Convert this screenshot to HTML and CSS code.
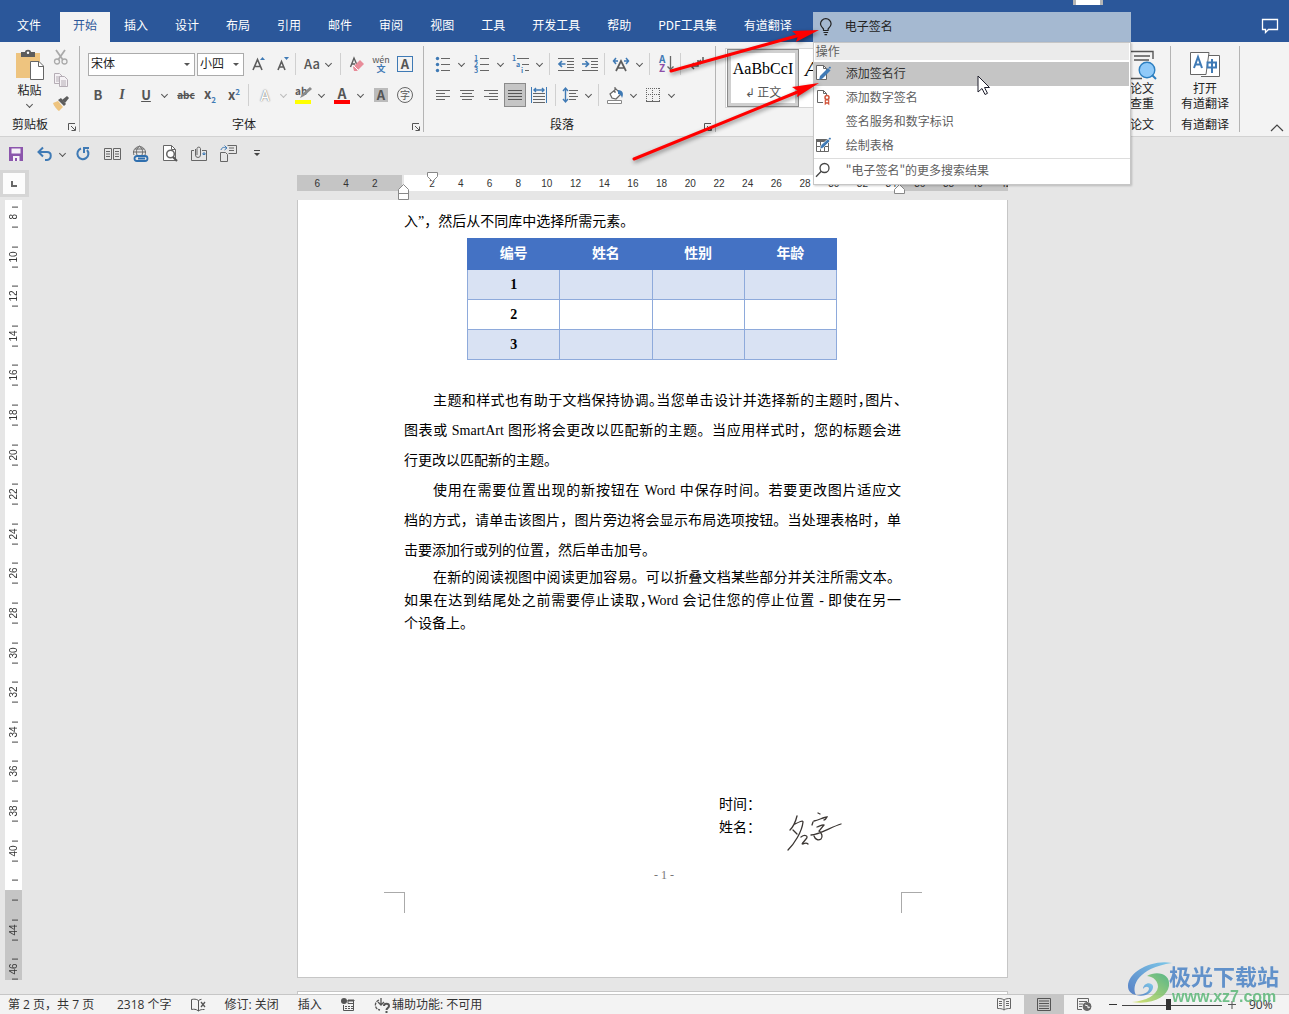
FILE: index.html
```html
<!DOCTYPE html>
<html lang="zh-CN">
<head>
<meta charset="utf-8">
<title>文档</title>
<link rel="stylesheet" href="styles.css">
</head>
<body>
<header class="tabbar">
  <nav class="tabs">
    <button class="tab file">文件</button><button class="tab active">开始</button><button class="tab">插入</button><button class="tab">设计</button><button class="tab">布局</button><button class="tab">引用</button><button class="tab">邮件</button><button class="tab">审阅</button><button class="tab">视图</button><button class="tab">工具</button><button class="tab">开发工具</button><button class="tab">帮助</button><button class="tab">PDF工具集</button><button class="tab">有道翻译</button>
  </nav>
  <div class="search">
    <svg width="16" height="18" viewBox="0 0 16 18" fill="none" stroke="#222" stroke-width="1.2"><path d="M5.5 12.5V11C4 9.500 2.500 8 2.500 6a5.300 5.300 0 0 1 10.600 0c0 2-1.500 3.500-3 5v1.500zM5.500 14.500h4.600M6.500 16.700h2.600"/></svg>
    <input type="text" aria-label="操作说明搜索" value="电子签名">
    <div class="results">
      <h2>操作</h2>
      <button class="res hot"><svg width="16" height="16" viewBox="0 0 16 16"><path d="M1.500.5h7l3 3v11h-10z" fill="#fff" stroke="#666"/><path d="M8.500.5v3h3" fill="none" stroke="#666"/><path d="M4 15l1-4 8-8 2.500 2.500-8 8z" fill="#3f7ab5"/><path d="M13.500 2.500l1.500-1 1 1-1 1.500z" fill="#3f7ab5"/></svg>添加签名行</button>
      <button class="res"><svg width="16" height="16" viewBox="0 0 16 16" fill="none"><path d="M8 13.500H2.500v-12h6l3 3V6M8.500 1.500v3h3" stroke="#666"/><circle cx="12" cy="8.500" r="2" stroke="#d2543a" stroke-width="1.500"/><path d="M10.300 15v-4h3.400v4l-1.700-1.500z" stroke="#d2543a" stroke-width="1.200"/></svg>添加数字签名</button>
      <button class="res"><span class="noicon"></span>签名服务和数字标识</button>
      <button class="res"><svg width="16" height="16" viewBox="0 0 16 16"><path d="M1.500 2.500h12v12h-12z" fill="#fff" stroke="#666"/><path d="M1 2h12v3H1zM1 9h12v1H1zM5 3h1v12H5zM9 9h1v6H9z" fill="#666"/><path d="M5 12l1-4 7-6 2 2-7 7z" fill="#3f7ab5" stroke="#fff" stroke-width=".6"/><path d="M13.500 1.500l1.500-1 1 1-1 1.500z" fill="#3f7ab5"/></svg>绘制表格</button>
      <button class="res more"><svg width="16" height="16" viewBox="0 0 16 16" fill="none" stroke="#444" stroke-width="1.300"><circle cx="9.500" cy="6" r="4.500"/><path d="M6.300 9.300L1 14.800"/></svg>"电子签名"的更多搜索结果</button>
      <svg class="cursor" width="14" height="21" viewBox="0 0 14 21"><path d="M1 1v16l4-3.500 3 6 2.500-1.200-3-5.800h5z" fill="#fff" stroke="#1d1d2b"/></svg>
    </div>
  </div>
  <button class="comment" aria-label="批注"><svg width="18" height="16" viewBox="0 0 18 16" fill="none" stroke="#fff" stroke-width="1.300"><path d="M1.500 1.500h15v10H7.500L4.500 14.500v-3h-3z"/></svg></button>
</header>

<section class="ribbon">
  <div class="group clip">
    <div class="body">
      <button class="big paste"><svg width="28" height="30" viewBox="0 0 28 30"><path d="M0 3h24v25H0z" fill="#eec47f"/><path d="M5 7V2h4c0-3 6-3 6 0h4v5z" fill="#5c5c5c"/><circle cx="12" cy="2.800" r="1.200" fill="#fff"/><path d="M14.500 11.500h8.500l4.500 4.500v13.500h-13z" fill="#fff" stroke="#666"/><path d="M22.500 11.500v5h5" fill="none" stroke="#666"/></svg><span>粘贴</span><i class="caret"></i></button>
      <div class="side">
        <button aria-label="剪切"><svg width="16" height="16" viewBox="0 0 16 16" fill="none" stroke="#aaa"><path d="M3 1l7 10M12 1L5 11" stroke-width="1.800"/><circle cx="4" cy="12.500" r="2.500" stroke-width="1.300"/><circle cx="11.500" cy="12.500" r="2.500" stroke-width="1.300"/></svg></button>
        <button aria-label="复制"><svg width="16" height="16" viewBox="0 0 16 16" fill="#f5f2f5" stroke="#b5adb5"><path d="M1.500 1.500h5l3 3v7h-8zM3 5h4M3 7h4M3 9h4"/><path d="M6.500 4.500h5l3 3v7h-8zM8 9h5M8 11h5M8 13h5"/></svg></button>
        <button aria-label="格式刷"><svg width="16" height="16" viewBox="0 0 16 16"><path d="M0 8l5-2 5 6-4 4c-2-1-5-5-6-8z" fill="#eec47f"/><path d="M5 5l3-2 5 6-2 2z" fill="#5c5c5c"/><path d="M9 5l5-4 2 2-4 5z" fill="#5c5c5c"/></svg></button>
      </div>
    </div>
    <div class="foot"><span>剪贴板</span><button class="launch" aria-label="剪贴板选项"><svg width="8" height="8" viewBox="0 0 8 8" fill="none" stroke="#555"><path d="M.5 7V.5H7M3 3l4 4M7.500 3.500v4h-4"/></svg></button></div>
  </div>

  <div class="group font">
    <div class="rows">
      <div class="row">
        <span class="combo wide"><select aria-label="字体"><option>宋体</option></select></span>
        <span class="combo narrow"><select aria-label="字号"><option>小四</option></select></span>
        <button class="ib ml3" aria-label="增大字号"><svg width="16" height="16" viewBox="0 0 16 16"><path d="M2 14L6.500 3.500 11 14M3.500 10.500h6" fill="none" stroke="#5c5c5c" stroke-width="1.600"/><path d="M9 4l2.500-3L14 4z" fill="#3f7ab5"/></svg></button>
        <button class="ib" aria-label="减小字号"><svg width="16" height="16" viewBox="0 0 16 16"><path d="M3 14l3.500-8.500L10 14M4 11h5" fill="none" stroke="#5c5c5c" stroke-width="1.600"/><path d="M9 1l2.500 3L14 1z" fill="#3f7ab5"/></svg></button>
        <i class="sep"></i>
        <button class="split"><span class="ic aa">Aa</span><i class="caret"></i></button>
        <i class="sep ml6"></i>
        <button class="ib ml2" aria-label="清除格式"><svg width="16" height="16" viewBox="0 0 16 16"><path d="M1.500 11L5 2l3 7M3 8h3" fill="none" stroke="#5c5c5c" stroke-width="1.400"/><path d="M4 11l7-7 4 4-7 7-3 0z" fill="#e88c99"/><path d="M5 10l4 4" stroke="#fff"/></svg></button>
        <button class="ib wen" aria-label="拼音指南"><span>wén</span><b>文</b></button>
        <button class="ib"><span class="box">A</span></button>
      </div>
      <div class="row">
        <button class="ib"><b>B</b></button>
        <button class="ib it">I</button>
        <button class="split"><span class="ic un">U</span><i class="caret"></i></button>
        <button class="ib ml4 st">abc</button>
        <button class="ib"><b>x<sub>2</sub></b></button>
        <button class="ib"><b>x<sup>2</sup></b></button>
        <i class="sep ml2"></i>
        <button class="split ml2"><span class="ic glow">A</span><i class="caret pale"></i></button>
        <button class="split ml2" aria-label="突出显示"><span class="ic"><svg width="18" height="18" viewBox="0 0 18 18"><text x="1" y="9" font-size="10" font-weight="bold" fill="#5c5c5c">ab</text><path d="M6 12l2-4 8-7 2 2-8 7z" fill="#8a8a8a"/><path d="M1 14h16v4H1z" fill="#ff0"/></svg></span><i class="caret"></i></button>
        <button class="split ml3"><span class="ic red">A</span><i class="caret"></i></button>
        <button class="ib ml3"><span class="shade">A</span></button>
        <button class="ib"><span class="ring">字</span></button>
      </div>
    </div>
    <div class="foot"><span>字体</span><button class="launch" aria-label="字体选项"><svg width="8" height="8" viewBox="0 0 8 8" fill="none" stroke="#555"><path d="M.5 7V.5H7M3 3l4 4M7.500 3.500v4h-4"/></svg></button></div>
  </div>

  <div class="group para">
    <div class="rows">
      <div class="row">
        <button class="split" aria-label="项目符号"><span class="ic"><svg width="16" height="16" viewBox="0 0 16 16"><g fill="#3f7ab5"><circle cx="2.500" cy="2.500" r="1.700"/><circle cx="2.500" cy="8.500" r="1.700"/><circle cx="2.500" cy="14.500" r="1.700"/></g><path d="M6 2h9v1H6zM6 8h9v1H6zM6 14h9v1H6z" fill="#666"/></svg></span><i class="caret"></i></button>
        <button class="split ml3" aria-label="编号"><span class="ic"><svg width="16" height="18" viewBox="0 0 16 18"><g font-size="7" font-weight="bold" fill="#3f7ab5"><text x="0" y="6">1</text><text x="0" y="12">2</text><text x="0" y="18">3</text></g><path d="M6 3h9v1H6zM6 9h9v1H6zM6 15h9v1H6z" fill="#666"/></svg></span><i class="caret"></i></button>
        <button class="split ml3" aria-label="多级列表"><span class="ic"><svg width="18" height="18" viewBox="0 0 18 18"><g font-size="7" font-weight="bold" fill="#3f7ab5"><text x="0" y="6">1</text><text x="4" y="12">a</text><text x="9" y="18">i</text></g><path d="M5 3h12v1H5zM10 9h7v1h-7zM13 15h4v1h-4z" fill="#666"/></svg></span><i class="caret"></i></button>
        <i class="sep ml4"></i>
        <button class="ib ml2" aria-label="减少缩进"><svg width="16" height="14" viewBox="0 0 16 14"><path d="M0 1h16v1H0zM9 4h7v1H9zM9 7h7v1H9zM9 10h7v1H9zM0 13h16v1H0z" fill="#666"/><path d="M7.500 7h-6M4 4L1 7l3 3" fill="none" stroke="#3f7ab5" stroke-width="1.700"/></svg></button>
        <button class="ib" aria-label="增加缩进"><svg width="16" height="14" viewBox="0 0 16 14"><path d="M0 1h16v1H0zM9 4h7v1H9zM9 7h7v1H9zM9 10h7v1H9zM0 13h16v1H0z" fill="#666"/><path d="M0 7h6M3.500 4l3 3-3 3" fill="none" stroke="#3f7ab5" stroke-width="1.700"/></svg></button>
        <i class="sep ml2"></i>
        <button class="split ml2" aria-label="中文版式"><span class="ic"><svg width="18" height="16" viewBox="0 0 18 16" fill="none"><path d="M4 15L9 5l5 10M6 12h6" stroke="#5c5c5c" stroke-width="1.700"/><path d="M6 5H2M4 2L1.500 5 4 8M12 5h4M14 2l2.500 3L14 8" stroke="#3f7ab5" stroke-width="1.500"/></svg></span><i class="caret"></i></button>
        <i class="sep ml4"></i>
        <button class="ib ml2" aria-label="排序"><svg width="16" height="18" viewBox="0 0 16 18"><g font-size="10" font-weight="bold"><text x="1" y="8" fill="#3f7ab5">A</text><text x="1" y="17" fill="#8d4fa8">Z</text></g><path d="M12.500 1v13M9.500 11.500l3 3 3-3" fill="none" stroke="#666" stroke-width="1.300"/></svg></button>
        <i class="sep ml2"></i>
        <button class="ib ml2" aria-label="显示标记"><svg width="16" height="16" viewBox="0 0 16 16" fill="none" stroke="#5c5c5c" stroke-width="1.500"><path d="M14 1v5H10M12 4L10 6l2 2M9 4v6H2M5 7l-3 3 3 3"/></svg></button>
      </div>
      <div class="row">
        <button class="ib" aria-label="左对齐"><svg width="14" height="12" viewBox="0 0 14 12"><path d="M0 1h14v1H0zM0 4h9v1H0zM0 7h14v1H0zM0 10h9v1H0z" fill="#666"/></svg></button>
        <button class="ib" aria-label="居中"><svg width="14" height="12" viewBox="0 0 14 12"><path d="M0 1h14v1H0zM2 4h10v1H2zM0 7h14v1H0zM2 10h10v1H2z" fill="#666"/></svg></button>
        <button class="ib" aria-label="右对齐"><svg width="14" height="12" viewBox="0 0 14 12"><path d="M0 1h14v1H0zM5 4h9v1H5zM0 7h14v1H0zM5 10h9v1H5z" fill="#666"/></svg></button>
        <button class="ib on" aria-label="两端对齐"><svg width="14" height="12" viewBox="0 0 14 12"><path d="M0 1h14v1H0zM0 4h14v1H0zM0 7h14v1H0zM0 10h14v1H0z" fill="#555"/></svg></button>
        <button class="ib" aria-label="分散对齐"><svg width="16" height="16" viewBox="0 0 16 16"><path d="M0 0h1v16H0zM15 0h1v16h-1z" fill="#3f7ab5"/><path d="M3 3h10M5 1L3 3l2 2M11 1l2 2-2 2" fill="none" stroke="#3f7ab5" stroke-width="1.400"/><path d="M2 6h12v1H2zM2 9h12v1H2zM2 12h12v1H2zM2 15h12v1H2z" fill="#666"/></svg></button>
        <i class="sep ml4"></i>
        <button class="split" aria-label="行距"><span class="ic"><svg width="16" height="16" viewBox="0 0 16 16"><path d="M3.500 1v14M1 4l2.500-3L6 4M1 12l2.500 3L6 12" fill="none" stroke="#3f7ab5" stroke-width="1.400"/><path d="M7 3h9v1H7zM7 6h7v1H7zM7 9h9v1H7zM7 12h7v1H7z" fill="#666"/></svg></span><i class="caret"></i></button>
        <i class="sep ml4"></i>
        <button class="split ml2" aria-label="底纹"><span class="ic"><svg width="18" height="18" viewBox="0 0 18 18"><path d="M4 8l6-5 5 5-5 5-4-1zM9 1v6" fill="#fff" stroke="#666" stroke-width="1.200"/><path d="M12 4c5 0 6 4 4 8-1-3-2-4-4-4z" fill="#3f7ab5"/><path d="M1.500 14.500h14v3h-14z" fill="#fff" stroke="#888"/></svg></span><i class="caret"></i></button>
        <button class="split ml2" aria-label="边框"><span class="ic"><svg width="14" height="14" viewBox="0 0 14 14" fill="none" stroke="#666"><path d="M0 .5h14M0 6.500h14M.5 0v14M6.500 0v14M13.500 0v14" stroke-dasharray="1 1"/><path d="M0 13.500h14"/></svg></span><i class="caret"></i></button>
      </div>
    </div>
    <div class="foot"><span>段落</span><button class="launch" aria-label="段落选项"><svg width="8" height="8" viewBox="0 0 8 8" fill="none" stroke="#555"><path d="M.5 7V.5H7M3 3l4 4M7.500 3.500v4h-4"/></svg></button></div>
  </div>

  <div class="group styles">
    <div class="gallery">
      <button class="style sel"><span>AaBbCcI</span><small>↲ 正文</small></button>
      <button class="style em"><span>A</span></button>
    </div>
  </div>

  <div class="group paper">
    <button class="big"><svg width="30" height="30" viewBox="0 0 30 30"><path d="M2 28V1.500h24V9M2 28.500h13" fill="none" stroke="#555" stroke-width="1.400"/><path d="M7 6h16M7 10h15" stroke="#555" stroke-width="1.600"/><circle cx="20" cy="20" r="7.800" fill="#90caf9" stroke="#2c7fc0" stroke-width="1.400"/><path d="M25 25l4 4" stroke="#2c7fc0" stroke-width="2"/></svg><span>论文<br>查重</span></button>
    <div class="foot"><span>论文</span></div>
  </div>
  <div class="group youdao">
    <button class="big"><svg width="30" height="30" viewBox="0 0 30 30"><path d="M14 5.500h15.500v21H11" fill="#fff" stroke="#666"/><path d="M.5 2.500H19L16 24.500H.500z" fill="#fff" stroke="#666"/><path d="M4 18L8 7l4 11M5.500 14.500h5" fill="none" stroke="#3f7ab5" stroke-width="2"/><path d="M17.500 12.500h8.500v5h-8.500zM22 9v14" fill="none" stroke="#3f7ab5" stroke-width="2"/></svg><span>打开<br>有道翻译</span></button>
    <div class="foot"><span>有道翻译</span></div>
  </div>
  <button class="collapse" aria-label="折叠功能区"><svg width="14" height="8" viewBox="0 0 14 8" fill="none" stroke="#444" stroke-width="1.200"><path d="M1 7l6-6 6 6"/></svg></button>
</section>

<div class="quick">
  <button aria-label="保存"><svg width="14" height="14" viewBox="0 0 14 14"><path d="M0 0h14v14H0z" fill="#8b55ac"/><path d="M2.500 1.500h9v5h-9zM4 9h6.500v5H8v-3H6v3H4z" fill="#f5f0f7"/></svg></button>
  <button aria-label="撤消"><svg width="16" height="14" viewBox="0 0 16 14" fill="none" stroke="#3f7ab5" stroke-width="2"><path d="M2 5h8c5 0 5 7 0 8H8M6 .5L1.500 5 6 9.500"/></svg></button>
  <button class="tiny" aria-label="撤消列表"><i class="caret"></i></button>
  <button aria-label="恢复"><svg width="16" height="16" viewBox="0 0 16 16" fill="none" stroke="#3f7ab5" stroke-width="2"><path d="M6 2.500a5.500 5.500 0 1 0 6 1.500M9 7V2h5"/></svg></button>
  <button aria-label="阅读"><svg width="17" height="14" viewBox="0 0 17 14" fill="none" stroke="#666"><path d="M.5 1.500h7v11h-7zM9.500 1.500h7v11h-7zM2 4.500h4M2 7h4M2 9.500h4M11 4.500h4M11 7h4M11 9.500h4"/></svg></button>
  <button aria-label="超链接"><svg width="18" height="18" viewBox="0 0 18 18" fill="none"><path d="M2 10a6 6 0 1 1 11 0M1.500 7h12M3 4h9M7.500 1C4 4 4 7 5 10M7.500 1c3.500 3 3.500 6 2.500 9" stroke="#666"/><path d="M9 11H5a2.500 2.500 0 0 0 0 5h4M9 11h4a2.500 2.500 0 0 1 0 5H9M6 13.500h7" stroke="#2f6fae" stroke-width="1.800"/></svg></button>
  <button aria-label="打印预览"><svg width="16" height="17" viewBox="0 0 16 17" fill="none"><path d="M1.500.5h8l4 4v11h-12z" fill="#fff" stroke="#666"/><path d="M9.500.5v4h4" stroke="#666"/><circle cx="8.500" cy="9" r="3.800" stroke="#666" stroke-width="1.500"/><path d="M11 12l4 4" stroke="#555" stroke-width="2.200"/></svg></button>
  <button aria-label="邮件附件"><svg width="17" height="16" viewBox="0 0 17 16" fill="none" stroke="#666"><path d="M3 4.500H.5v10h15v-10H11"/><path d="M4.500 3v6a2.500 2.500 0 0 0 5 0V2.500a1.800 1.800 0 0 0-3.500 0V9"/><path d="M12 7h2v1.500h-2z" stroke="#3f7ab5"/></svg></button>
  <button aria-label="发送"><svg width="17" height="17" viewBox="0 0 17 17" fill="none" stroke="#666"><path d="M7.500.5h9v8h-8M9 3h5M9 5.500h5M.5 7.500h5l2 2v7h-7z"/><path d="M1 5c1-3 3-3 5-2M4.500.5L7 3 4.500 5" stroke="#3f7ab5"/></svg></button>
  <button aria-label="自定义"><svg width="6" height="7" viewBox="0 0 6 7"><path d="M0 0h6v1H0zM0 3h6L3 6z" fill="#444"/></svg></button>
</div>

<main class="work">
  <button class="tabsel" aria-label="制表符"><svg width="6" height="6" viewBox="0 0 6 6"><path d="M1 0v5h5" fill="none" stroke="#666" stroke-width="2"/></svg></button>
  <div class="hwrap">
    <div class="hruler">
      <div class="nums"><span>6</span><span>4</span><span>2</span><span></span><span>2</span><span>4</span><span>6</span><span>8</span><span>10</span><span>12</span><span>14</span><span>16</span><span>18</span><span>20</span><span>22</span><span>24</span><span>26</span><span>28</span><span>30</span><span>32</span><span>34</span><span>36</span><span>38</span><span>40</span><span>42</span></div>
      <svg class="mark first" width="11" height="10" viewBox="0 0 11 10"><path d="M.5.5h10v4l-5 5-5-5z" fill="#fff" stroke="#888"/></svg>
      <svg class="mark hang" width="11" height="16" viewBox="0 0 11 16"><path d="M.5 5.500l5-5 5 5v10H.5zM.5 9.500h10" fill="#fff" stroke="#888"/></svg>
      <svg class="mark right" width="11" height="10" viewBox="0 0 11 10"><path d="M.5 5.500l5-5 5 5v4H.5z" fill="#fff" stroke="#888"/></svg>
    </div>
  </div>
  <div class="vruler"><div class="vnums"><span>8</span><span>10</span><span>12</span><span>14</span><span>16</span><span>18</span><span>20</span><span>22</span><span>24</span><span>26</span><span>28</span><span>30</span><span>32</span><span>34</span><span>36</span><span>38</span><span>40</span><span></span><span>44</span><span>46</span></div></div>
  <div class="canvas">
    <article class="page">
      <p class="loose">入”，然后从不同库中选择所需元素。</p>
      <table>
        <thead><tr><th>编号</th><th>姓名</th><th>性别</th><th>年龄</th></tr></thead>
        <tbody>
          <tr><th>1</th><td></td><td></td><td></td></tr>
          <tr><th>2</th><td></td><td></td><td></td></tr>
          <tr><th>3</th><td></td><td></td><td></td></tr>
        </tbody>
      </table>
      <p class="loose"><span class="ln ind half">主题和样式也有助于文档保持协调。当您单击设计并选择新的主题时，图片、</span><span class="ln">图表或 SmartArt 图形将会更改以匹配新的主题。当应用样式时，您的标题会进</span><span>行更改以匹配新的主题。</span></p>
      <p class="loose"><span class="ln ind">使用在需要位置出现的新按钮在 Word 中保存时间。若要更改图片适应文</span><span class="ln">档的方式，请单击该图片，图片旁边将会显示布局选项按钮。当处理表格时，单</span><span>击要添加行或列的位置，然后单击加号。</span></p>
      <p class="tight"><span class="ln ind">在新的阅读视图中阅读更加容易。可以折叠文档某些部分并关注所需文本。</span><span class="ln half">如果在达到结尾处之前需要停止读取，Word 会记住您的停止位置 - 即使在另一</span><span>个设备上。</span></p>
      <div class="sign tight"><div>时间：</div><div>姓名：</div>
        <svg width="56" height="40" viewBox="0 0 56 40" fill="none" stroke="#3b3633" stroke-width="1.300" stroke-linecap="round"><path d="M10 4C8 12 5 16 3 18M8 12c4-2 8-4 8-2-1 10-9 22-15 28M6 18l4 4M14 25c4-3 8-1 5 2-3 4-5 5-3 5 2-1 4-1 5 0M31 1l2 1M26 10l-1 3M27 9c5-1 10-4 13-4-1 2-2 3-3 3M30 15c3-1 6-3 7-2l-5 6c3 2 4 6 2 8-3 2-6 0-7-3M24 23c8 0 20-8 30-11"/></svg>
      </div>
      <div class="pageno">- 1 -</div>
      <i class="crop l"></i><i class="crop r"></i>
    </article>
    <div class="page next"></div>
  </div>
</main>

<footer class="status">
  <span class="pages">第 2 页，共 7 页</span><span>2318 个字</span>
  <svg width="15" height="14" viewBox="0 0 15 14" fill="none" stroke="#555"><path d="M7.500 2.500C5 .8 3 1 .5 1.500v10c2.500-.5 4.500-.5 7 1.500zM7.500 2.500c1-.8 2-1 3-1.200M7.500 13c2-1.500 3-1.500 6-1.500"/><path d="M10 4l4 5M14 4l-4 5" stroke-width="1.300"/></svg>
  <span>修订: 关闭</span><span>插入</span>
  <svg width="14" height="14" viewBox="0 0 14 14"><circle cx="3" cy="3" r="3" fill="#555"/><path d="M7 2h6v1H7zM2.500 7v5.500h10V2.500H7v3h6" fill="none" stroke="#555"/><path d="M4 8h2v1H4zM7 8h2v1H7zM10 8h2v1h-2zM4 10h2v1H4zM7 10h2v1H7zM10 10h2v1h-2z" fill="#555"/></svg>
  <span class="acc"><svg width="18" height="16" viewBox="0 0 18 16" fill="none" stroke="#555" stroke-width="1.300"><path d="M5 3C0 5 0 12 6 13" stroke-dasharray="3 1"/><path d="M7 1v7M4 5l3 3 3-3"/><path d="M10 9c0-3 5-3 5 0 0 2-2.500 2-2.500 4M12.500 14v2" stroke-width="2"/></svg>辅助功能: 不可用</span>
  <div class="views">
    <button aria-label="阅读视图"><svg width="14" height="13" viewBox="0 0 14 13" fill="none" stroke="#666"><path d="M7 2C5 .5 3 .5.5.5v10c2.500 0 4.500 0 6.500 1.500 2-1.500 4-1.500 6.500-1.500V.5C11 .5 9 .5 7 2zM7 2v10M2 3.500h3M2 5.500h3M2 7.500h3M9 3.500h3M9 5.500h3M9 7.500h3"/></svg></button>
    <button class="cur" aria-label="页面视图"><svg width="14" height="13" viewBox="0 0 14 13" fill="none" stroke="#555"><path d="M.5.5h13v12H.5zM2 3h10M2 5.500h10M2 8h10M2 10.500h10"/></svg></button>
    <button aria-label="Web 版式"><svg width="15" height="13" viewBox="0 0 15 13" fill="none" stroke="#666"><path d="M5 11.500H.5V.5h11V4M2 3.500h8M2 6h4M2 8.500h3"/><circle cx="10" cy="8.500" r="4" fill="#666"/><path d="M8 7l3 1v2l2-1" stroke="#eee"/></svg></button>
    <button class="zoom out" aria-label="缩小"><svg width="8" height="8" viewBox="0 0 8 8"><path d="M0 3h8v1H0z" fill="#333"/></svg></button>
    <input type="range" aria-label="显示比例" min="10" max="184" value="90">
    <button class="zoom" aria-label="放大"><svg width="8" height="8" viewBox="0 0 8 8"><path d="M0 3h8v1H0zM3.500 0h1v8h-1z" fill="#555"/></svg></button>
    <span class="pct">90%</span>
  </div>
</footer>

<svg class="arrows" width="200" height="140" viewBox="0 0 200 140"><g fill="#f00" stroke="#f00"><path d="M43 45L172 9" stroke-width="3" stroke-linecap="round"/><path d="M191 4l-23 12 2-6-6-5z" stroke="none"/><path d="M6 133L172 65" stroke-width="3" stroke-linecap="round"/><path d="M191 57l-22 14 1-6-6-4z" stroke="none"/></g></svg>
<div class="brand">
  <svg width="44" height="42" viewBox="0 0 44 42"><defs><linearGradient id="b" x1="0" y1="1" x2="1" y2="0"><stop offset="0" stop-color="#3f6fc0"/><stop offset="1" stop-color="#6cc4ea"/></linearGradient><linearGradient id="g" x1="0" y1="1" x2="1" y2="0"><stop offset="0" stop-color="#d2de5a"/><stop offset="1" stop-color="#3fae78"/></linearGradient></defs><path d="M44 1C24-3 0 10 0 24c0 5 3 8 8 9-5-9 2-27 36-32z" fill="url(#b)"/><path d="M19 14c10-6 24-2 22 10-2 11-16 19-37 16 14-1 25-7 26-15 0-6-4-10-11-11z" fill="url(#g)"/><path d="M8 33c9 3 18-3 17-9-2-5-10-3-10 3 2-3 6-3 6 0-1 4-7 6-13 6z" fill="url(#b)"/></svg>
  <div><strong>极光下载站</strong><em>www.xz7.com</em></div>
</div>
</body>
</html>
```
FILE: styles.css
```css
* { box-sizing: border-box; }
body {
  margin: 0; height: 100vh; display: flex; flex-direction: column; overflow: hidden; position: relative;
  background: #e6e6e6; color: #333;
  font: 12px/16px "Noto Sans CJK SC", sans-serif;
}
button, input, select { font: inherit; color: inherit; background: none; border: 0; padding: 0; margin: 0; }
button { display: flex; align-items: center; justify-content: center; flex: none; }
svg { display: block; flex: none; overflow: visible; }

/* Tabs and search */
.tabbar { flex: none; height: 42px; padding: 12px 8px 0 4px; display: flex; background: #2b579a; position: relative; z-index: 3; }
.tabbar::after { content: ""; position: absolute; left: 1073px; top: 0; width: 24px; height: 5px; background: #fff; border: 0 solid #b5b5b5; border-width: 0 3px; }
.tabs { display: flex; gap: 1px; }
.tab { height: 30px; padding: 0 13px 4px; color: #fff; white-space: nowrap; }
.tab.file { margin-right: 5px; }
.tab.active { background: #f3f3f3; color: #2b579a; }
.search { width: 318px; height: 30px; margin-left: 8px; padding-left: 5px; display: flex; align-items: center; gap: 11px; background: #a5b9d1; position: relative; }
.search input { flex: 1; min-width: 0; height: 24px; padding-bottom: 4px; color: #222; outline: 0; }
.results { position: absolute; left: 0; top: 30px; width: 100%; background: #fff; border: 1px solid #c6c6c6; box-shadow: 1px 1px 2px rgba(0,0,0,.2); color: #5e5e5e; }
.results h2 { margin: 0 1px 2px; padding: 0 0 2px 1px; font-size: 12px; font-weight: 400; line-height: 15px; background: #ebebeb; }
.res { width: 100%; height: 24px; padding: 0 0 2px 1px; gap: 15px; justify-content: flex-start; }
.noicon { width: 16px; }
.res.hot { background: #c5c5c5; color: #333; background-clip: padding-box; border-right: 1px solid #fff; }
.res.more { height: 26px; padding-bottom: 3px; border-top: 1px solid #ddd; }
.cursor { position: absolute; left: 163px; top: 32px; }
.comment { margin-left: auto; width: 22px; height: 28px; }

/* Ribbon */
.ribbon { flex: none; height: 95px; display: flex; background: #f3f3f3; border-bottom: 1px solid #d2d2d2; color: #222; position: relative; }
.group { flex: none; height: 86px; margin-top: 4px; padding-top: 6px; border-right: 1px solid #b4b4b4; display: flex; flex-direction: column; }
.group.clip { width: 80px; }
.group.font { width: 344px; }
.group.para { width: 292px; }
.group.styles { width: 398px; border-right: 0; padding: 2px 0 0 9px; }
.group.paper { width: 57px; padding-top: 4px; }
.group.youdao { width: 69px; padding-top: 4px; }
.foot { margin-top: auto; height: 14px; line-height: 12px; display: flex; align-items: center; }
.foot span { flex: 1; text-align: center; padding-bottom: 2px; white-space: nowrap; }
.foot button { width: 8px; margin: 4px 3px 0 4px; }
.clip .foot button { margin-left: 8px; }
.clip .body { display: flex; }
.big { flex-direction: column; justify-content: flex-start; line-height: 15px; }
.paste { width: 52px; padding-left: 8px; margin-top: -2px; }
.paste > span { margin-top: 2px; }
.paste .caret { margin-top: 5px; }
.paste > span, .paste .caret { margin-right: 1px; }
.side { display: flex; flex-direction: column; margin-top: -7px; }
.side button { width: 18px; height: 23px; }
.rows { display: flex; flex-direction: column; gap: 7px; padding-left: 6px; }
.para .rows { padding-left: 7px; }
.row { display: flex; height: 24px; align-items: center; color: #555; }
.font .row:first-child { padding-left: 2px; }
.ib, .ic { width: 24px; height: 24px; }
.ib b, .ib { font-size: 13px; }
.ib sub, .ib sup { font-size: 8px; line-height: 8px; color: #3f7ab5; }
.ic { display: flex; align-items: center; justify-content: center; font-weight: 700; font-size: 14px; }
.split { width: 36px; }
.caret { width: 12px; height: 6px; flex: none; display: flex; justify-content: center; }
.caret::before { content: ""; width: 4px; height: 4px; border: solid #555; border-width: 0 1px 1px 0; transform: rotate(45deg); }
.caret.pale::before { border-color: #bbb; }
.ml2 { margin-left: 2px; }
.ml3 { margin-left: 3px; }
.ml4 { margin-left: 4px; }
.ml6 { margin-left: 6px; }
.sep { width: 1px; height: 22px; margin-right: 2px; background: #d0d0d0; flex: none; }
.combo { height: 23px; border: 1px solid #ababab; background: #fff; color: #222; position: relative; }
.combo::after { content: ""; position: absolute; right: 4px; top: 9px; border: 3px solid transparent; border-top-color: #555; border-bottom: 0; }
.combo select { appearance: none; width: 100%; height: 21px; padding: 0 0 2px 2px; outline: 0; }
.wide { width: 107px; margin-right: 2px; }
.narrow { width: 47px; }
.aa { font-weight: 500; font-size: 13px; padding-left: 4px; }
.wen { flex-direction: column; line-height: 8px; }
.wen span { font-size: 9px; }
.ib.wen b { font-size: 9px; color: #3f7ab5; line-height: 9px; }
.box { width: 16px; height: 16px; border: 1px solid #3f7ab5; line-height: 13px; font-weight: 700; }
.it { font: italic 700 14px "Liberation Serif", serif; }
.un { text-decoration: underline; font-size: 13px; }
.ib.st { font-size: 10px; font-weight: 700; text-decoration: line-through; }
.glow { color: #fff; font-weight: 400; font-size: 15px; text-shadow: 0 0 1px #777, 0 0 2px #999; }
.ic.red { width: 16px; height: 17px; margin: 0 4px; border-bottom: 4px solid #f00; }
.shade { width: 14px; height: 14px; line-height: 14px; background: #bbb; font-weight: 700; }
.ring { width: 16px; height: 16px; border: 1px solid #666; border-radius: 50%; font-size: 10px; line-height: 13px; }
.ib.on { background: #c5c5c5; border: 1px solid #8a8a8a; width: 22px; margin: 0 1px; }
.gallery { height: 60px; display: flex; background: #fff; border: 1px solid #d5d5d5; padding: 0 0 0 1px; overflow: hidden; }
.style { width: 72px; flex-direction: column; font: 16px/20px "Liberation Serif", serif; color: #000; border: 0; }
.style.sel { border: 1px solid #8a8a8a; outline: 3px solid #d0d0d0; outline-offset: -4px; padding-top: 3px; }
.style small { font: 12px/16px "Noto Sans CJK SC", sans-serif; color: #555; margin-top: 5px; }
.style.em { font-style: italic; font-size: 22px; width: 110px; padding-left: 6px; align-items: flex-start; justify-content: flex-start; padding-top: 10px; }
.collapse { position: absolute; right: 5px; bottom: 4px; }

/* Quick access */
.quick { flex: none; height: 33px; padding-left: 2px; display: flex; gap: 1px; }
.quick button { width: 28px; height: 33px; }
.quick .tiny { width: 8px; justify-content: flex-start; }
.quick .tiny .caret { width: 5px; }

/* Document area */
.work { flex: 1; min-height: 0; display: grid; grid-template: 30px 1fr / 29px 1fr; }
.tabsel { width: 29px; height: 27px; background: #fcfcfc; border: 3px solid #d6d6d6; border-width: 3px 4px 3px 3px; }
.hwrap, .canvas { padding-right: 13px; display: flex; flex-direction: column; align-items: center; }
.hruler { width: 711px; height: 16px; margin-top: 5px; position: relative; background: linear-gradient(90deg, #c5c5c5 105px, #e6e6e6 105px 107px, #fff 107px 603px, #c5c5c5 603px); }
.nums { width: 717px; height: 16px; margin-left: 6px; clip-path: inset(0 12px 0 0); display: flex; font: 10px/17px "Liberation Sans", sans-serif; }
.nums span { flex: 1 1 0; text-align: center; }
.mark { position: absolute; }
.first { left: 130px; top: -3px; }
.hang { left: 101px; top: 9px; }
.right { left: 597px; top: 9px; }
.vruler { width: 17px; height: 780px; margin-left: 5px; overflow: hidden; background: linear-gradient(#fff 690px, #c5c5c5 690px); }
.vnums { height: 792px; margin-top: -3px; display: flex; flex-direction: column; font: 10px/17px "Liberation Sans", sans-serif; }
.vnums span { flex: 1 1 0; width: 17px; writing-mode: vertical-rl; transform: rotate(180deg); text-align: center; background: linear-gradient(#444, #444) 4px 9px / 6px 1px no-repeat, linear-gradient(#444, #444) 4px 29px / 6px 1px no-repeat; }
.canvas { overflow: hidden; }
.page { flex: none; width: 711px; height: 778px; padding: 7px 106px 0; position: relative; background: #fff; border: 1px solid #c6c6c6; border-top: 0; color: #000; font: 14px/30px "Liberation Serif", "Noto Sans CJK SC", serif; }
.page.next { margin-top: 13px; border-top: 1px solid #c6c6c6; }
.page p { margin: 0; }
.page p span { display: block; white-space: nowrap; }
.page p .ln { text-align-last: justify; }
.page p .ind { padding-left: 29px; }
.half { font-feature-settings: "halt"; }
.page .tight { line-height: 23px; }
table { width: 370px; margin: 1px 0 26px 63px; border-collapse: collapse; table-layout: fixed; }
th, td { height: 30px; padding: 0; border: 1px solid #8eaadb; line-height: 22px; text-align: center; }
thead th { height: 31px; color: #fff; background: #4472c4; border-color: #4472c4; }
tbody tr:nth-child(odd) { background: #d9e2f3; }
.sign { margin: 158px 0 0 315px; position: relative; }
.sign svg { position: absolute; left: 68px; top: 19px; }
.pageno { margin: 28px -23px 0 0; text-align: center; font-size: 12px; line-height: 16px; color: #777; }
.crop { position: absolute; top: 692px; width: 21px; height: 21px; border-top: 1px solid #aaa; }
.crop.l { left: 86px; border-right: 1px solid #aaa; }
.crop.r { right: 85px; border-left: 1px solid #aaa; }

/* Status bar */
.status { flex: none; height: 20px; padding-left: 8px; display: flex; align-items: center; gap: 19px; background: #f3f3f3; border-top: 1px solid #c6c6c6; white-space: nowrap; font-family: "Open Sans", "Noto Sans CJK SC", sans-serif; }
.pages { min-width: 90px; }
.acc { display: flex; align-items: center; }
.views { margin-left: auto; padding-right: 14px; display: flex; align-items: center; }
.views button { width: 40px; height: 20px; }
.views .cur { background: #c6c6c6; }
.views button.zoom { width: 20px; }
.views button.out { width: 18px; }
.views input { appearance: none; width: 100px; height: 12px; background: linear-gradient(#444, #444) 0 6px / 100% 1px no-repeat; }
.views input::-webkit-slider-thumb { appearance: none; width: 5px; height: 11px; background: #333; }
.pct { width: 26px; margin-left: 7px; }

/* Overlays */
.arrows { position: absolute; left: 628px; top: 26px; z-index: 5; filter: drop-shadow(1px 2px 2px rgba(0,0,0,.45)); pointer-events: none; }
.brand { position: absolute; right: 10px; bottom: 8px; display: flex; z-index: 6; opacity: .85; pointer-events: none; }
.brand strong, .brand em { display: block; font-style: normal; font-weight: 700; }
.brand strong { font-size: 22px; line-height: 26px; color: #4a83c6; margin-left: -3px; }
.brand em { font: 700 16px/18px "Liberation Sans", sans-serif; color: #5cb878; }
```
